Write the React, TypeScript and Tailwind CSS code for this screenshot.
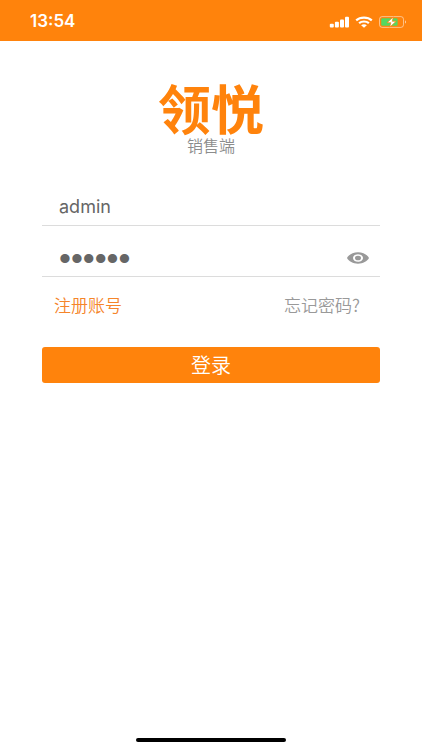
import { useState } from "react";

function SignalIcon() {
  return (
    <svg width="20" height="12" viewBox="0 0 20 12" fill="currentColor" aria-hidden="true">
      <rect x="0.8" y="7.8" width="4" height="3.6" rx="1" />
      <rect x="5.9" y="5.8" width="4" height="5.6" rx="1" />
      <rect x="11" y="3.4" width="4" height="8" rx="1" />
      <rect x="16" y="0.8" width="4" height="10.6" rx="1" />
    </svg>
  );
}

function WifiIcon() {
  return (
    <svg width="18" height="12" viewBox="0 0 18 12" aria-hidden="true">
      <g fill="none" stroke="currentColor" strokeWidth="2.2">
        <path d="M1.2 4.3C5.4 0.7 12.6 0.7 16.8 4.3" />
        <path d="M4.1 7.2C6.8 4.9 11.2 4.9 13.9 7.2" />
      </g>
      <path d="M6.1 9.2C7.8 7.9 10.2 7.9 11.9 9.2L9 11.7Z" fill="currentColor" />
    </svg>
  );
}

function BatteryIcon() {
  return (
    <svg width="28" height="12" viewBox="0 0 28 12" aria-hidden="true">
      <rect x="0.5" y="0.6" width="24" height="10.8" rx="2.6" fill="none" stroke="#fff" strokeOpacity="0.5" />
      <path d="M26 4.2C27.4 4.8 27.4 7 26 7.6Z" fill="#fff" fillOpacity="0.6" />
      <rect x="2.2" y="2.2" width="16.4" height="7.6" rx="1.4" fill="#54d860" />
      <path
        d="M14.3 0.9L8 6.7H11.8L10.8 11.1L17.2 5.3H13.3Z"
        fill="#fff"
        stroke="#ff830c"
        strokeWidth="0.7"
      />
    </svg>
  );
}

function EyeIcon() {
  return (
    <svg width="22" height="12" viewBox="0 0 22 12" aria-hidden="true">
      <path
        fill="currentColor"
        fillRule="evenodd"
        d="M11 0.3C6 0.3 1.8 2.6 0 6C1.8 9.4 6 11.7 11 11.7S20.2 9.4 22 6C20.2 2.6 16 0.3 11 0.3ZM11 9.8C8.2 9.8 6 8.1 6 6S8.2 2.2 11 2.2S16 3.9 16 6S13.8 9.8 11 9.8Z"
      />
      <ellipse cx="11" cy="6" rx="3" ry="2.3" fill="currentColor" />
    </svg>
  );
}

function StatusBar() {
  return (
    <header className="flex h-[41px] items-center justify-between bg-[#ff830c] pt-0.5 pr-[15px] pl-[30px] text-white">
      <time className="font-['Inter',sans-serif] text-[17px] font-semibold">13:54</time>
      <div className="flex items-center gap-1.5">
        <SignalIcon />
        <WifiIcon />
        <BatteryIcon />
      </div>
    </header>
  );
}

export default function App() {
  const [account, setAccount] = useState("admin");
  const [password, setPassword] = useState("123456");
  const [visible, setVisible] = useState(false);

  return (
    <div className="flex min-h-screen flex-col bg-white font-['Noto_Sans_CJK_SC',sans-serif]">
      <StatusBar />

      <main className="px-[42px] pt-9">
        <div className="text-center">
          <h1 className="text-[53px] leading-15 font-bold text-[#ff830c]">领悦</h1>
          <p className="text-base leading-4 font-[350] text-[#8c8c8c]">销售端</p>
        </div>

        <form className="pt-9" onSubmit={(event) => event.preventDefault()}>
          <div className="flex h-[37px] items-center border-b border-[#dcdcdc] px-[17px]">
            <input
              type="text"
              aria-label="账号"
              value={account}
              onChange={(event) => setAccount(event.target.value)}
              className="w-full bg-transparent font-['Inter',sans-serif] text-lg text-[#666] outline-none"
            />
          </div>

          <div className="mt-3.5 flex h-[37px] items-center border-b border-[#dcdcdc] pr-[11px] pl-[17px]">
            <input
              type={visible ? "text" : "password"}
              aria-label="密码"
              value={password}
              onChange={(event) => setPassword(event.target.value)}
              className="h-9 min-w-0 flex-1 bg-transparent font-['Liberation_Sans',sans-serif] text-[34px] text-[#666] outline-none"
            />
            <button
              type="button"
              aria-label="显示密码"
              onClick={() => setVisible(!visible)}
              className="text-[#999]"
            >
              <EyeIcon />
            </button>
          </div>

          <div className="mt-4 flex justify-between pr-5 pl-3 text-[17px] leading-6 font-[350]">
            <a href="#register" className="text-[#f5852a]">
              注册账号
            </a>
            <a href="#forgot" className="text-[#999]">
              忘记密码?
            </a>
          </div>

          <button
            type="submit"
            className="mt-[30px] h-9 w-full rounded-[3px] bg-[#ff830c] text-xl font-[350] text-white"
          >
            登录
          </button>
        </form>
      </main>

      <div className="mx-auto mt-auto mb-2 h-1 w-[150px] rounded-full bg-black" />
    </div>
  );
}
